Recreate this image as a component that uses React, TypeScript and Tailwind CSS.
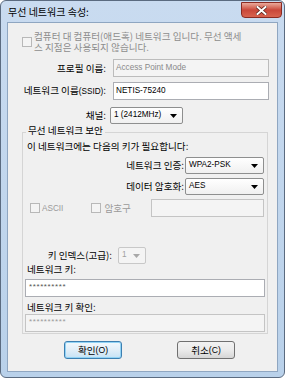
import React from "react";

const KR = { fontFamily: '"Noto Sans CJK KR", "Noto Sans", sans-serif' };
const LAT = { fontFamily: '"Liberation Sans", Arial, sans-serif' };

function Check({ disabled }: { disabled?: boolean }) {
  return (
    <div
      className={
        "w-[10px] h-[10px] shrink-0 border " +
        (disabled ? "border-[#b8b8b8] bg-[#f4f4f4]" : "border-[#8f8f8f] bg-[#f8f8f8]")
      }
    />
  );
}

function Arrow({ disabled }: { disabled?: boolean }) {
  return (
    <svg width="7" height="4" viewBox="0 0 7 4" className="shrink-0">
      <path d="M0 0 L7 0 L3.5 4 Z" fill={disabled ? "#a8a8a8" : "#000"} />
    </svg>
  );
}

function Select({ text, w, disabled }: { text: string; w: string; disabled?: boolean }) {
  return (
    <div
      className={
        "h-[17px] flex items-center justify-between pl-[3px] pr-[5px] rounded-[2px] border " +
        w +
        (disabled
          ? " border-[#c8c8c8] bg-[#f4f4f4] text-[#a0a0a0]"
          : " border-[#8e8f8f] bg-gradient-to-b from-[#ffffff] to-[#f0f0f0] text-black")
      }
    >
      <span className="text-[8.2px] leading-none" style={LAT}>
        {text}
      </span>
      <Arrow disabled={disabled} />
    </div>
  );
}

export default function App() {
  return (
    <div
      className="w-[285px] h-[378px] rounded-[6px] border border-[#5b6b80] bg-gradient-to-b from-[#c9dbf0] to-[#b9d1ea] flex flex-col overflow-hidden"
      style={KR}
    >
      {/* title bar */}
      <div className="h-[21px] flex items-start relative">
        <div className="pl-[7px] pt-[5px] text-[10px] leading-[12px] text-black">무선 네트워크 속성:</div>
        <div className="ml-auto mr-[2px] mt-[1px] w-[41px] h-[16px] rounded-b-[4px] border border-[#8a2b22] bg-gradient-to-b from-[#e9a99b] via-[#c9473a] to-[#d8634f] flex items-center justify-center">
          <svg width="11" height="9" viewBox="0 0 11 9">
            <path d="M1.5 1 L9.5 8 M9.5 1 L1.5 8" stroke="#5a2018" strokeWidth="3.4" strokeLinecap="square" />
            <path d="M1.5 1 L9.5 8 M9.5 1 L1.5 8" stroke="#ffffff" strokeWidth="2" strokeLinecap="square" />
          </svg>
        </div>
      </div>

      {/* content panel */}
      <div className="mx-[6px] mb-[5px] flex-1 border border-[#8fa6c1] bg-[#f0f0f0] flex flex-col text-[9.6px] leading-[11px] text-black">
        {/* ad hoc checkbox */}
        <div className="mt-[8px] pl-[14px] flex items-center gap-[2px] text-[#8d8d8d]">
          <Check disabled />
          <div>
            <div>컴퓨터 대 컴퓨터(애드혹) 네트워크 입니다. 무선 액세</div>
            <div>스 지점은 사용되지 않습니다.</div>
          </div>
        </div>

        {/* profile name */}
        <div className="mt-[6px] flex items-center">
          <div className="w-[98px] text-right">프로필 이름:</div>
          <div className="ml-[7px] w-[156px] h-[18px] border border-[#bcbcbc] bg-[#f4f4f4] pl-[2px] pt-[3px] text-[8.2px] leading-[10px] text-[#8a8a8a]" style={LAT}>
            Access Point Mode
          </div>
        </div>

        {/* SSID */}
        <div className="mt-[5px] flex items-center">
          <div className="w-[98px] text-right whitespace-nowrap">
            네트워크 이름<span className="text-[8.2px]" style={LAT}>(SSID)</span>:
          </div>
          <div className="ml-[7px] w-[156px] h-[18px] border border-[#abadb3] bg-white pl-[2px] pt-[3px] text-[8.2px] leading-[10px] text-black" style={LAT}>
            NETIS-75240
          </div>
        </div>

        {/* channel */}
        <div className="mt-[7px] flex items-center">
          <div className="w-[98px] text-right">채널:</div>
          <div className="ml-[4px]">
            <Select text="1 (2412MHz)" w="w-[73px]" />
          </div>
        </div>

        {/* group box */}
        <div className="mt-[8px] ml-[14px] mr-[9px] border border-[#d5d5d5] flex flex-col">
          <div className="-mt-[8px] ml-[3px] self-start px-[2px] bg-[#f0f0f0]">무선 네트워크 보안</div>
          <div className="mt-[5px] pl-[4px]">이 네트워크에는 다음의 키가 필요합니다:</div>

          <div className="mt-[5px] flex items-center justify-end pr-[3px]">
            <div className="mr-[1px]">네트워크 인증:</div>
            <Select text="WPA2-PSK" w="w-[79px]" />
          </div>
          <div className="mt-[4px] flex items-center justify-end pr-[3px]">
            <div className="mr-[1px]">데이터 암호화:</div>
            <Select text="AES" w="w-[79px]" />
          </div>

          <div className="mt-[4px] flex items-center text-[#9a9a9a]">
            <div className="ml-[7px] flex items-center gap-[2px]">
              <Check disabled />
              <span className="text-[8.2px]" style={LAT}>ASCII</span>
            </div>
            <div className="ml-[28px] flex items-center gap-[3px]">
              <Check disabled />
              <span>암호구</span>
            </div>
            <div className="ml-auto mr-[3px] w-[113px] h-[18px] border border-[#c4c4c4] bg-[#f4f4f4]" />
          </div>

          <div className="mt-[30px] flex items-center">
            <div className="w-[89px] text-right">키 인덱스(고급):</div>
            <div className="ml-[6px]">
              <Select text="1" w="w-[28px]" disabled />
            </div>
          </div>

          <div className="pl-[4px]">네트워크 키:</div>
          <div className="mt-[4px] ml-[2px] w-[240px] h-[18px] border border-[#abadb3] bg-white pl-[3px] pt-[2px] text-[8px] leading-[10px] tracking-[0.6px] text-[#555]" style={LAT}>
            **********
          </div>
          <div className="mt-[5px] pl-[4px]">네트워크 키 확인:</div>
          <div className="mt-[1px] mb-[1px] ml-[2px] w-[240px] h-[18px] border border-[#c4c4c4] bg-[#f4f4f4] pl-[3px] pt-[2px] text-[8px] leading-[10px] tracking-[0.6px] text-[#9a9a9a]" style={LAT}>
            **********
          </div>
        </div>

        {/* buttons */}
        <div className="mt-[7px] pl-[56px] flex gap-[55px]">
          <div className="w-[58px] h-[18px] rounded-[3px] border border-[#3c7fb1] bg-gradient-to-b from-[#f2f9fd] via-[#e1eef8] to-[#c6e2f5] flex items-center justify-center shadow-[inset_0_0_0_1px_#92d3f5]">
            확인<span style={LAT} className="text-[8.6px]">(O)</span>
          </div>
          <div className="w-[58px] h-[18px] rounded-[3px] border border-[#707070] bg-gradient-to-b from-[#f2f2f2] via-[#ebebeb] to-[#d6d6d6] flex items-center justify-center">
            취소<span style={LAT} className="text-[8.6px]">(C)</span>
          </div>
        </div>
      </div>
    </div>
  );
}
